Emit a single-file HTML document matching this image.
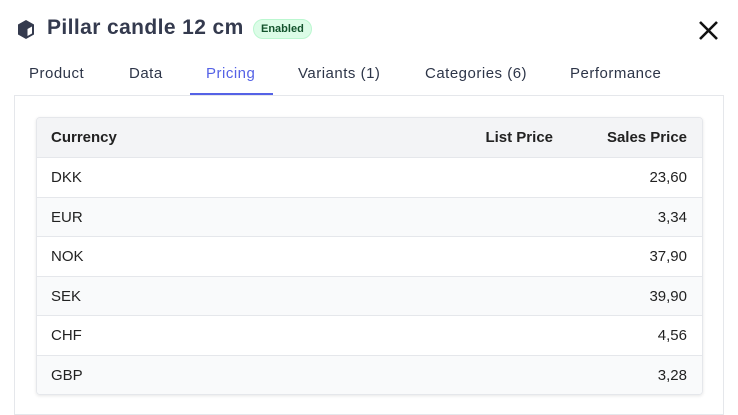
<!DOCTYPE html>
<html><head><style>
*{margin:0;padding:0;box-sizing:border-box}
body{width:738px;height:406px;background:#fff;font-family:"Liberation Sans",sans-serif;position:relative;overflow:hidden;color:#1f2937}
.title{position:absolute;left:47px;top:16px;font-size:21px;font-weight:bold;color:#343a4e;letter-spacing:0.4px}
.badge{position:absolute;left:253px;top:19px;height:20px;padding:0 7px;border-radius:10px;background:#dcfce7;border:1px solid #bbf7d0;color:#14532d;font-size:11px;font-weight:bold;line-height:18px}
.tab{position:absolute;top:65px;font-size:15px;color:#2d3548;letter-spacing:0.5px}
.tab.a{color:#5562e6}
.ul{position:absolute;left:190px;top:93px;width:83px;height:2px;background:#5562e6}
.panel{position:absolute;left:14px;top:95px;width:710px;height:320px;border:1px solid #e5e7eb}
.tbl{position:absolute;left:36px;top:117px;width:667px;border:1px solid #e5e7eb;border-radius:4px;box-shadow:0 1px 3px rgba(0,0,0,.1);overflow:hidden}
.r{height:39.5px;border-top:1px solid #e5e7eb;position:relative;font-size:15px;color:#222}
.r:first-child{border-top:none;background:#f3f4f6;font-weight:bold;height:39px}
.r.g{background:#f9fafb}
.r span{position:absolute;top:11px}
.c1{left:14px}.c3{right:15px}.c2{right:149px}
</style></head><body>
<svg style="position:absolute;left:16px;top:19px" width="20" height="21" viewBox="0 0 20 21"><path d="M10 1 L18 5.5 V15.5 L10 20 L2 15.5 V5.5 Z" fill="#343a4e"/><path d="M11.5 10 L16 7.5 V14.5 L11.5 17 Z" fill="#fff"/></svg>
<div class="title">Pillar candle 12 cm</div>
<div class="badge">Enabled</div>
<svg style="position:absolute;left:698px;top:20px" width="21" height="21" viewBox="0 0 21 21"><path d="M2 2 L19 19 M19 2 L2 19" stroke="#111" stroke-width="2.6"/></svg>
<div class="tab" style="left:29px">Product</div>
<div class="tab" style="left:129px">Data</div>
<div class="tab a" style="left:206px">Pricing</div>
<div class="tab" style="left:298px">Variants (1)</div>
<div class="tab" style="left:425px">Categories (6)</div>
<div class="tab" style="left:570px">Performance</div>
<div class="panel"></div>
<div class="ul"></div>
<div class="tbl">
<div class="r"><span class="c1">Currency</span><span class="c2">List Price</span><span class="c3">Sales Price</span></div>
<div class="r"><span class="c1">DKK</span><span class="c3">23,60</span></div>
<div class="r g"><span class="c1">EUR</span><span class="c3">3,34</span></div>
<div class="r"><span class="c1">NOK</span><span class="c3">37,90</span></div>
<div class="r g"><span class="c1">SEK</span><span class="c3">39,90</span></div>
<div class="r"><span class="c1">CHF</span><span class="c3">4,56</span></div>
<div class="r g"><span class="c1">GBP</span><span class="c3">3,28</span></div>
</div>
</body></html>
